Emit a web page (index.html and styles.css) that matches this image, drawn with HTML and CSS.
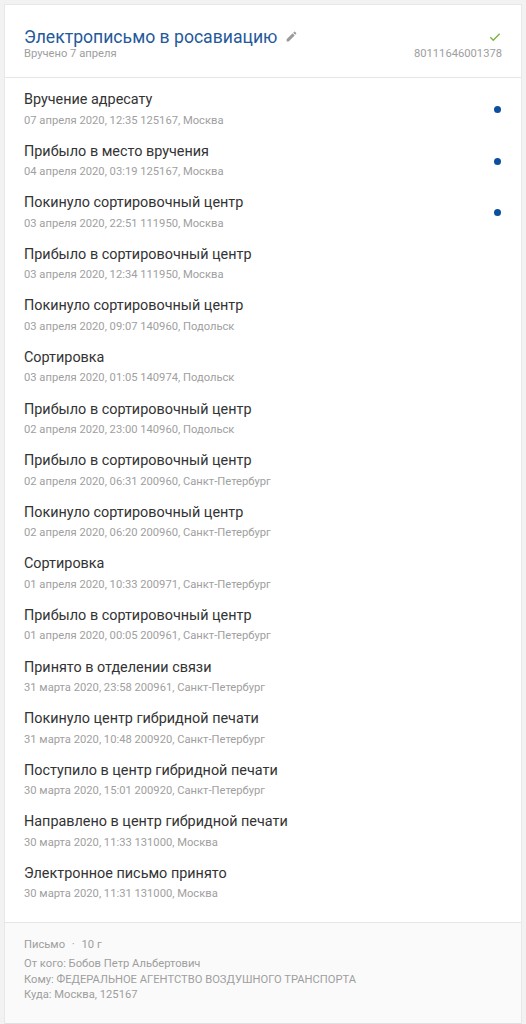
FILE: index.html
```html
<!DOCTYPE html>
<html lang="ru">
<head>
<meta charset="utf-8">
<link rel="stylesheet" href="styles.css">
</head>
<body>
<div class="card">
  <div class="header">
    <div class="head-left">
      <div class="title-row">
        <span class="title">Электрописьмо в росавиацию</span>
        <svg class="pencil" viewBox="0 0 24 24" width="13" height="13"><path d="M3 17.25V21h3.75L17.81 9.94l-3.75-3.75L3 17.25zM20.71 7.04a1 1 0 0 0 0-1.41l-2.34-2.34a1 1 0 0 0-1.41 0l-1.83 1.83 3.75 3.75 1.83-1.83z" fill="#9a9a9a"/></svg>
      </div>
      <div class="sub">Вручено 7 апреля</div>
    </div>
    <div class="head-right">
      <svg class="check" viewBox="0 0 24 24" width="14" height="14"><path d="M4 12.5l5 5L20 6.5" fill="none" stroke="#7cb342" stroke-width="2.4"/></svg>
      <div class="sub">80111646001378</div>
    </div>
  </div>
  <div class="events">
    <div class="event"><div class="ev-text"><div class="ev-title">Вручение адресату</div><div class="ev-date">07 апреля 2020, 12:35 125167, Москва</div></div><span class="dot"></span></div>
    <div class="event"><div class="ev-text"><div class="ev-title">Прибыло в место вручения</div><div class="ev-date">04 апреля 2020, 03:19 125167, Москва</div></div><span class="dot"></span></div>
    <div class="event"><div class="ev-text"><div class="ev-title">Покинуло сортировочный центр</div><div class="ev-date">03 апреля 2020, 22:51 111950, Москва</div></div><span class="dot"></span></div>
    <div class="event"><div class="ev-text"><div class="ev-title">Прибыло в сортировочный центр</div><div class="ev-date">03 апреля 2020, 12:34 111950, Москва</div></div></div>
    <div class="event"><div class="ev-text"><div class="ev-title">Покинуло сортировочный центр</div><div class="ev-date">03 апреля 2020, 09:07 140960, Подольск</div></div></div>
    <div class="event"><div class="ev-text"><div class="ev-title">Сортировка</div><div class="ev-date">03 апреля 2020, 01:05 140974, Подольск</div></div></div>
    <div class="event"><div class="ev-text"><div class="ev-title">Прибыло в сортировочный центр</div><div class="ev-date">02 апреля 2020, 23:00 140960, Подольск</div></div></div>
    <div class="event"><div class="ev-text"><div class="ev-title">Прибыло в сортировочный центр</div><div class="ev-date">02 апреля 2020, 06:31 200960, Санкт-Петербург</div></div></div>
    <div class="event"><div class="ev-text"><div class="ev-title">Покинуло сортировочный центр</div><div class="ev-date">02 апреля 2020, 06:20 200960, Санкт-Петербург</div></div></div>
    <div class="event"><div class="ev-text"><div class="ev-title">Сортировка</div><div class="ev-date">01 апреля 2020, 10:33 200971, Санкт-Петербург</div></div></div>
    <div class="event"><div class="ev-text"><div class="ev-title">Прибыло в сортировочный центр</div><div class="ev-date">01 апреля 2020, 00:05 200961, Санкт-Петербург</div></div></div>
    <div class="event"><div class="ev-text"><div class="ev-title">Принято в отделении связи</div><div class="ev-date">31 марта 2020, 23:58 200961, Санкт-Петербург</div></div></div>
    <div class="event"><div class="ev-text"><div class="ev-title">Покинуло центр гибридной печати</div><div class="ev-date">31 марта 2020, 10:48 200920, Санкт-Петербург</div></div></div>
    <div class="event"><div class="ev-text"><div class="ev-title">Поступило в центр гибридной печати</div><div class="ev-date">30 марта 2020, 15:01 200920, Санкт-Петербург</div></div></div>
    <div class="event"><div class="ev-text"><div class="ev-title">Направлено в центр гибридной печати</div><div class="ev-date">30 марта 2020, 11:33 131000, Москва</div></div></div>
    <div class="event"><div class="ev-text"><div class="ev-title">Электронное письмо принято</div><div class="ev-date">30 марта 2020, 11:31 131000, Москва</div></div></div>
  </div>
  <div class="footer">
    <div class="kind">Письмо <span class="sep">·</span> 10 г</div>
    <div class="addr">
      <div>От кого: Бобов Петр Альбертович</div>
      <div>Кому: ФЕДЕРАЛЬНОЕ АГЕНТСТВО ВОЗДУШНОГО ТРАНСПОРТА</div>
      <div>Куда: Москва, 125167</div>
    </div>
  </div>
</div>
</body>
</html>
```

FILE: styles.css
```css
* { box-sizing: border-box; }
html, body { margin: 0; padding: 0; }
body {
  background: #f2f2f2;
  font-family: Roboto, "Noto Sans", Arial, sans-serif;
  padding: 4px 4px 0 4px;
  height: 1024px;
  overflow: hidden;
}
.card {
  width: 518px;
  background: #fff;
  border: 1px solid #e8e8e8;
  border-bottom: none;
}
.header {
  display: flex;
  justify-content: space-between;
  align-items: flex-start;
  padding: 22px 19px 16px 19px;
  border-bottom: 1px solid #e6e6e6;
}
.title-row { display: flex; align-items: center; gap: 8px; height: 20px; }
.title { font-size: 17.6px; line-height: 20px; color: #24599b; }
.pencil { display: block; margin-top: -2px; }
.sub { font-size: 11.2px; line-height: 14px; color: #9e9e9e; }
.head-right { display: flex; flex-direction: column; align-items: flex-end; }
.check { display: block; margin: 3px 0 3px 0; }
.events {
  padding: 12px 19px 20px 19px;
  display: flex;
  flex-direction: column;
  gap: 13.1px;
  border-bottom: 1px solid #e6e6e6;
}
.event { display: flex; justify-content: space-between; align-items: center; }
.ev-title { font-size: 14.4px; line-height: 20px; color: #333; }
.ev-date { font-size: 11.2px; line-height: 16px; color: #a0a0a0; margin-top: 2.5px; }
.dot {
  width: 7px; height: 7px; border-radius: 50%;
  background: #0c4f9e;
  margin-right: 1px;
  margin-top: 1px;
}
.footer {
  background: #fafafa;
  padding: 15px 19px 20px 19px;
  font-size: 11.2px;
  color: #9e9e9e;
  border-bottom: 1px solid #e0e0e0;
}
.kind { line-height: 14px; }
.sep { margin: 0 4px; }
.addr { margin-top: 4px; line-height: 15.5px; }
```
